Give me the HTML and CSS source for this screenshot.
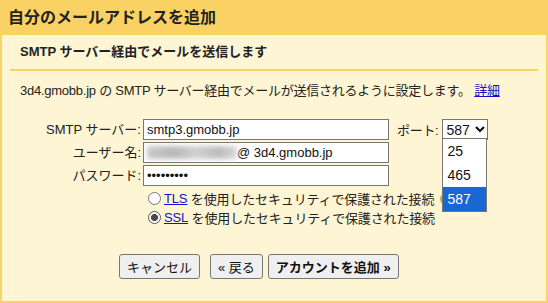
FILE: index.html
```html
<!DOCTYPE html>
<html lang="ja">
<head>
  <meta charset="UTF-8" />
  <meta name="viewport" content="width=device-width, initial-scale=1.0"/>
  <link rel="stylesheet" href="styles.css">
</head>
<body>

  <div class="dialog">
    <div class="dialog-title">自分のメールアドレスを追加</div>

    <div class="panel">
      <div class="subtitle">SMTP サーバー経由でメールを送信します</div>

      <p class="desc">3d4.gmobb.jp の SMTP サーバー経由でメールが送信されるように設定します。 <a href="#">詳細</a></p>

      <!-- SMTP SETTINGS FORM -->
      <div class="smtp-form">
        <label class="field-label">SMTP サーバー:</label>
        <input class="field" type="text" value="smtp3.gmobb.jp" />
        <div class="port">
          <span class="port-label">ポート:</span>
          <div class="port-select">
            <span>587</span>
            <svg class="chevron" width="10" height="7" viewBox="0 0 10 7"><polyline points="1,1 5,5 9,1" fill="none" stroke="#111" stroke-width="2.2" /></svg>
            <ul class="port-list">
              <li>25</li>
              <li>465</li>
              <li class="selected">587</li>
            </ul>
          </div>
        </div>

        <label class="field-label">ユーザー名:</label>
        <div class="field user-field">
          <span class="blurred"></span>
          <span>@ 3d4.gmobb.jp</span>
        </div>
        <div></div>

        <label class="field-label">パスワード:</label>
        <input class="field" type="password" value="123456789" />
        <div></div>

        <div></div>
        <div class="security">
          <label class="radio-row">
            <input type="radio" name="sec" />
            <a href="#">TLS</a>&nbsp;を使用したセキュリティで保護された接続
            <span class="help-icon"></span>
          </label>
          <label class="radio-row">
            <input type="radio" name="sec" checked />
            <a href="#">SSL</a>&nbsp;を使用したセキュリティで保護された接続
          </label>
        </div>
      </div>

      <div class="buttons">
        <button class="cancel-btn">キャンセル</button>
        <button>« 戻る</button>
        <button class="add-btn">アカウントを追加 »</button>
      </div>
    </div>
  </div>

</body>
</html>
```

FILE: styles.css
```css
body {
  margin: 0;
  padding: 0;
  font-family: 'Liberation Sans', 'Noto Sans CJK JP', sans-serif;
  font-size: 13px;
  color: #222;
  background-color: #fef5d5;
}

.dialog {
  background-color: #fad264;
  padding: 0 2px 2px 2px;
  height: 303px;
  box-sizing: border-box;
  display: flex;
  flex-direction: column;
}

.dialog-title {
  height: 35px;
  line-height: 35px;
  padding-left: 6px;
  font-size: 16px;
  font-weight: bold;
  color: #222;
}

.panel {
  flex: 1;
  background-color: #fef5d5;
}

.subtitle {
  margin: 0 8px;
  padding-left: 10px;
  height: 34px;
  line-height: 34px;
  font-weight: bold;
  border-bottom: 2px solid #fad264;
}

.desc {
  margin: 11px 0 0 18px;
  line-height: 18px;
  letter-spacing: -0.25px;
}

.desc a, .radio-row a {
  color: #1a0dcc;
}

/* FORM GRID */
.smtp-form {
  display: grid;
  grid-template-columns: 121px 246px auto;
  column-gap: 2px;
  row-gap: 2px;
  margin: 19px 0 0 18px;
  align-items: center;
}

.field-label {
  text-align: right;
  line-height: 21px;
}

.field {
  height: 21px;
  box-sizing: border-box;
  border: 1px solid #767676;
  background: white;
  padding: 0 3px;
  margin: 0;
  font-family: 'Liberation Sans', 'Noto Sans CJK JP', sans-serif;
  font-size: 13px;
  color: #111;
  outline: none;
}

.user-field {
  display: flex;
  align-items: center;
}

.blurred {
  width: 90px;
  height: 13px;
  background: linear-gradient(90deg, #c9c9c9, #b8b8b8 30%, #d0d0d0 55%, #bcbcbc 80%, #d8d8d8);
  filter: blur(2.5px);
}

.port {
  display: flex;
  align-items: center;
  padding-left: 6px;
}

.port-label {
  margin-right: 4px;
  letter-spacing: -0.3px;
}

.port-select {
  position: relative;
  width: 46px;
  height: 21px;
  box-sizing: border-box;
  border: 1px solid #767676;
  background: white;
  display: flex;
  align-items: center;
  padding-left: 3px;
  font-size: 14px;
  color: #111;
}

.chevron {
  margin-left: 5px;
}

/* open dropdown list */
.port-list {
  position: absolute;
  top: 18px;
  left: -1px;
  width: 45px;
  box-sizing: border-box;
  margin: 0;
  padding: 0;
  list-style: none;
  background: white;
  border: 1px solid #767676;
  z-index: 10;
}

.port-list li {
  height: 24px;
  line-height: 24px;
  padding-left: 4px;
  font-size: 14px;
}

.port-list li.selected {
  background-color: #1967d2;
  color: white;
}

/* security radios */
.security {
  grid-column: 2 / 4;
  margin-top: 1px;
  letter-spacing: -0.15px;
}

.radio-row {
  display: flex;
  align-items: center;
  height: 19px;
}

.radio-row input {
  appearance: none;
  width: 13px;
  height: 13px;
  margin: 0 3px 0 5px;
  border: 1px solid #767676;
  border-radius: 50%;
  background: white;
}

.radio-row input:checked {
  background: radial-gradient(circle, #4a4a4a 3.2px, white 3.8px);
  border-color: #555;
}

.help-icon {
  width: 12px;
  height: 12px;
  border-radius: 50%;
  background-color: #f29423;
  margin-left: 6px;
}

/* BUTTONS */
.buttons {
  margin: 27px 0 0 117px;
  display: flex;
  gap: 5px;
}

.buttons button {
  height: 25px;
  padding: 0 7px;
  background-color: #efefef;
  border: 1px solid #767676;
  border-radius: 3px;
  font-family: 'Liberation Sans', 'Noto Sans CJK JP', sans-serif;
  font-size: 13px;
  color: #111;
}

.cancel-btn {
  margin-right: 5px;
}

.add-btn {
  font-weight: bold;
}
```
